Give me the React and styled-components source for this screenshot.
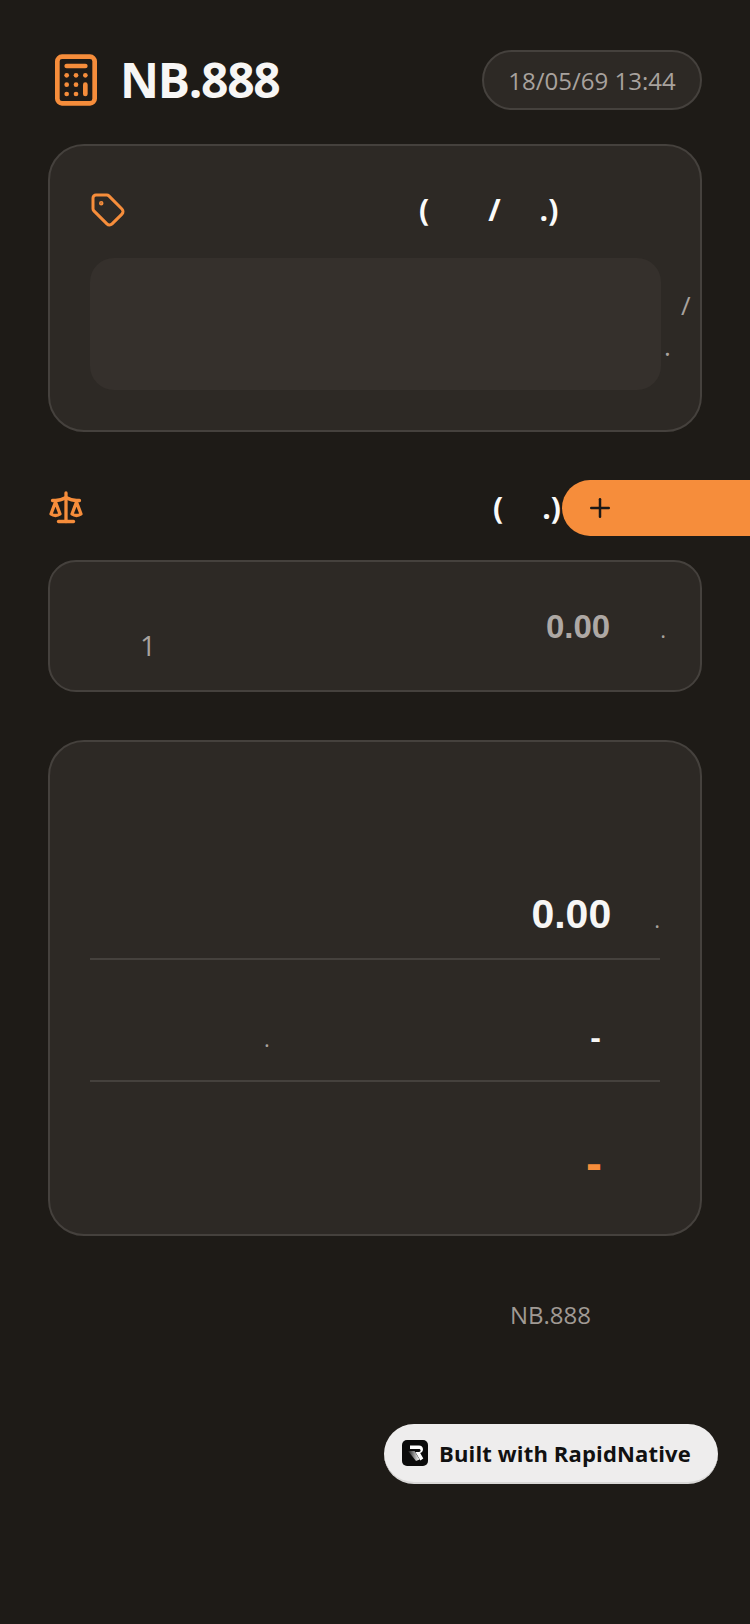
import React from 'react';
import styled, { createGlobalStyle } from 'styled-components';
import { Calculator, Tag, Plus } from 'lucide-react';

const orange = '#f68d3b';

const GlobalStyle = createGlobalStyle`
  html, body {
    margin: 0;
    padding: 0;
    background: #1e1b17;
  }
  body {
    font-family: "Open Sans", "Liberation Sans", sans-serif;
    overflow: hidden;
  }
`;

const Page = styled.div`
  position: relative;
  width: 750px;
  height: 1624px;
  box-sizing: border-box;
  padding: 50px 48px 0;
  background: #1e1b17;
  overflow: hidden;
`;

const Header = styled.header`
  display: flex;
  align-items: center;
  justify-content: space-between;
  height: 60px;
  margin-bottom: 34px;
`;

const Brand = styled.div`
  display: flex;
  align-items: center;
  gap: 16px;
  color: ${orange};
`;

const Title = styled.h1`
  margin: 0;
  font-size: 48px;
  line-height: 60px;
  font-weight: 700;
  letter-spacing: -1.3px;
  color: #f7f6f5;
`;

const DatePill = styled.div`
  box-sizing: border-box;
  width: 220px;
  height: 60px;
  display: flex;
  align-items: center;
  justify-content: center;
  border-radius: 30px;
  border: 2px solid #45413d;
  background: #2d2925;
  color: #a8a29e;
  font-size: 24px;
`;

const Card = styled.section`
  box-sizing: border-box;
  border: 2px solid #45413d;
  border-radius: ${(p) => p.$radius || 36}px;
  background: #2d2925;
  padding: ${(p) => p.$padding || '40px'};
  margin-bottom: ${(p) => p.$gap || 0}px;
  height: ${(p) => p.$height}px;
`;

const SectionTitle = styled.div`
  display: flex;
  align-items: center;
  height: 48px;
  color: ${orange};
`;

const Heading = styled.span`
  display: inline-flex;
  align-items: center;
  margin-left: ${(p) => p.$indent}px;
  margin-right: ${(p) => p.$after || 0}px;
  font-family: "Open Sans", sans-serif;
  font-size: 30px;
  line-height: 48px;
  font-weight: 700;
  color: #fafaf9;
  white-space: pre;
`;

/* thai text has no glyphs in the shot, only its advance is left */
const Blank = styled.span`
  display: inline-block;
  width: ${(p) => p.$w}px;
`;

const InputRow = styled.div`
  display: flex;
  margin-top: 24px;
`;

const InputBox = styled.div`
  flex: 0 0 571px;
  height: 132px;
  border-radius: 24px;
  background: #35302c;
`;

const Overflow = styled.div`
  flex: 0 0 40px;
  display: flex;
  flex-direction: column;
  color: #a8a29e;
  font-size: 26px;
  line-height: 36px;
`;

const OverflowLine = styled.span`
  margin-top: ${(p) => p.$top}px;
  margin-left: ${(p) => p.$left}px;
`;

const ItemsHeader = styled.div`
  display: flex;
  align-items: center;
  height: 56px;
  margin: 48px -48px 24px 0;
  color: ${orange};
`;

const AddButton = styled.button`
  flex: 1;
  height: 56px;
  display: flex;
  align-items: center;
  padding: 0 0 0 23px;
  border: 0;
  border-radius: 28px 0 0 28px;
  background: ${orange};
  color: #1c1917;
`;

const ItemRow = styled.div`
  display: flex;
  align-items: center;
  height: 128px;
  padding: 0 34px 0 90px;
`;

const ItemIndex = styled.span`
  padding-top: 38px;
  font-size: 28px;
  line-height: 36px;
  color: #a8a29e;
`;

const Amount = styled.div`
  margin-left: auto;
  display: flex;
  align-items: baseline;
  padding-top: ${(p) => p.$top || 0}px;
`;

const Money = styled.span`
  font-family: "Liberation Sans", Arial, sans-serif;
  font-weight: 700;
  font-size: ${(p) => p.$size}px;
  line-height: 48px;
  color: ${(p) => p.$color};
`;

const Unit = styled.span`
  margin-left: ${(p) => p.$left}px;
  font-size: 22px;
  color: #a8a29e;
`;

const SummaryRow = styled.div`
  box-sizing: border-box;
  display: flex;
  align-items: flex-end;
  height: ${(p) => p.$height}px;
  padding-bottom: ${(p) => p.$bottom}px;
  border-bottom: ${(p) => (p.$line ? '2px solid #45413d' : '0')};
`;

const RowDot = styled.span`
  margin-left: 174px;
  margin-bottom: ${(p) => p.$bottom || 0}px;
  font-size: 22px;
  line-height: 30px;
  color: #a8a29e;
`;

const RowValue = styled.span`
  margin-left: auto;
  margin-right: ${(p) => p.$right}px;
  font-family: "Liberation Sans", Arial, sans-serif;
  font-weight: 700;
  font-size: ${(p) => p.$size}px;
  line-height: 48px;
  color: ${(p) => p.$color};
`;

const Footer = styled.div`
  display: flex;
  justify-content: flex-end;
  margin-top: 62px;
  padding-right: 111px;
  font-size: 24px;
  line-height: 34px;
  color: #a09a94;
`;

const BuiltBadge = styled.div`
  position: absolute;
  left: 384px;
  top: 1424px;
  box-sizing: border-box;
  width: 334px;
  height: 60px;
  display: flex;
  align-items: center;
  gap: 11px;
  padding-left: 18px;
  border-radius: 30px;
  border-bottom: 2px solid #d9d8d7;
  background: #eeeded;
  color: #111;
  font-size: 22px;
  font-weight: 700;
  letter-spacing: 0.15px;
  white-space: nowrap;
`;

const ScaleIcon = () => (
  <svg width="36" height="36" viewBox="0 0 24 24" fill="none" stroke="currentColor" strokeWidth="2.2" strokeLinecap="round" strokeLinejoin="round">
    <path d="m16 16 3-8 3 8c-.87.65-1.92 1-3 1s-2.13-.35-3-1Z" />
    <path d="m2 16 3-8 3 8c-.87.65-1.92 1-3 1s-2.13-.35-3-1Z" />
    <path d="M7 21h10" />
    <path d="M12 2v19" />
    <path d="M3 7h2c2 0 5-1 7-2 2 1 5 2 7 2h2" />
  </svg>
);

const RapidLogo = () => (
  <svg width="26" height="26" viewBox="0 0 26 26">
    <defs>
      <linearGradient id="legFade" x1="0" y1="0" x2="1" y2="0">
        <stop offset="0" stopColor="#fff" stopOpacity="0.05" />
        <stop offset="1" stopColor="#fff" />
      </linearGradient>
    </defs>
    <rect width="26" height="26" rx="5" fill="#0b0b0b" />
    <path d="M8 5.500h9c2.400 0 4 1.600 4 3.800 0 1.900-1.100 3.300-2.800 3.800l3.100 5.400-2.900 2-5-8.500h3.700c.9 0 1.500-.6 1.500-1.400s-.6-1.500-1.500-1.500H8Z" fill="#fff" />
    <path d="M6 11h6.500l5 8.500-3.500 1.500Z" fill="url(#legFade)" />
  </svg>
);

export default function App() {
  return (
    <Page>
      <GlobalStyle />
      <Header>
        <Brand>
          <Calculator size={56} />
          <Title>NB.888</Title>
        </Brand>
        <DatePill>18/05/69 13:44</DatePill>
      </Header>

      <Card $height={288}>
        <SectionTitle>
          <Tag size={36} />
          <Heading $indent={293}>
            (<Blank $w={59} />/<Blank $w={39} />.)
          </Heading>
        </SectionTitle>
        <InputRow>
          <InputBox />
          <Overflow>
            <OverflowLine $top={29} $left={20}>/</OverflowLine>
            <OverflowLine $top={5} $left={3}>.</OverflowLine>
          </Overflow>
        </InputRow>
      </Card>

      <ItemsHeader>
        <ScaleIcon />
        <Heading $indent={409} $after={1}>
          (<Blank $w={39} />.)
        </Heading>
        <AddButton>
          <Plus size={30} />
        </AddButton>
      </ItemsHeader>

      <Card $height={132} $radius={28} $padding="0" $gap={48}>
        <ItemRow>
          <ItemIndex>1</ItemIndex>
          <Amount $top={2}>
            <Money $size={33} $color="#aea8a4">0.00</Money>
            <Unit $left={50}>.</Unit>
          </Amount>
        </ItemRow>
      </Card>

      <Card $height={496}>
        <SummaryRow $height={178} $bottom={20} $line>
          <Amount>
            <Money $size={41} $color="#f7f6f5">0.00</Money>
            <Unit $left={43}>.</Unit>
          </Amount>
        </SummaryRow>
        <SummaryRow $height={122} $bottom={19} $line>
          <RowDot $bottom={8}>.</RowDot>
          <RowValue $size={32} $color="#f7f6f5" $right={59}>-</RowValue>
        </SummaryRow>
        <SummaryRow $height={110} $bottom={4}>
          <RowValue $size={48} $color={orange} $right={58}>-</RowValue>
        </SummaryRow>
      </Card>

      <Footer>NB.888</Footer>

      <BuiltBadge>
        <RapidLogo />
        Built with RapidNative
      </BuiltBadge>
    </Page>
  );
}
